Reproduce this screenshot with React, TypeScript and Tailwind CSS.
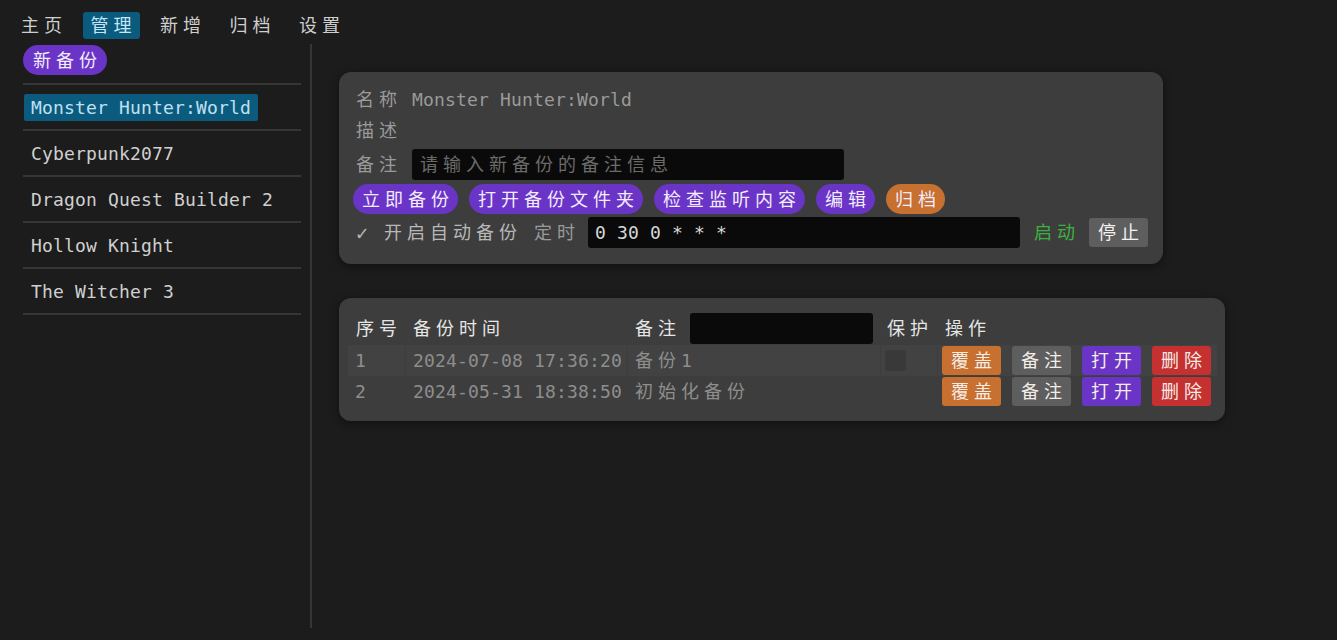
import React from "react";

const CJK = /[\u2e80-\u9fff\uff00-\uffef]/;

function T({ s }: { s: string }) {
  const runs: { cjk: boolean; t: string }[] = [];
  for (const ch of s) {
    const c = CJK.test(ch);
    const last = runs[runs.length - 1];
    if (last && last.cjk === c) last.t += ch;
    else runs.push({ cjk: c, t: ch });
  }
  return (
    <>
      {runs.map((r, i) =>
        r.cjk ? (
          <span
            key={i}
            className={i === runs.length - 1 ? "tracking-[5px] -mr-[5px]" : "tracking-[5px]"}
          >
            {r.t}
          </span>
        ) : (
          <span key={i}>{r.t}</span>
        )
      )}
    </>
  );
}

const navItems = ["主页", "管理", "新增", "归档", "设置"];
const games = ["Monster Hunter:World", "Cyberpunk2077", "Dragon Quest Builder 2", "Hollow Knight", "The Witcher 3"];

function Pill({ s, orange }: { s: string; orange?: boolean }) {
  return (
    <div
      className={
        "h-[30px] px-[9px] rounded-full flex items-center shrink-0 text-[#f3ecff] " +
        (orange ? "bg-[#c8702f]" : "bg-[#6a34c6]")
      }
    >
      <T s={s} />
    </div>
  );
}

function Btn({ s, color }: { s: string; color: string }) {
  return (
    <div className={"h-[29px] w-[59px] shrink-0 rounded-[3px] flex items-center justify-center text-[#f4ece6] " + color}>
      <T s={s} />
    </div>
  );
}

function ActionBtns() {
  return (
    <div className="flex items-center gap-[11px] pl-[4px]">
      <Btn s="覆盖" color="bg-[#c8702f]" />
      <Btn s="备注" color="bg-[#5e5e5e]" />
      <Btn s="打开" color="bg-[#6a34c6]" />
      <Btn s="删除" color="bg-[#c53030]" />
    </div>
  );
}

const cols = "grid grid-cols-[57px_221px_252px_56px_279px] gap-x-px";

export default function App() {
  return (
    <div
      className="bg-[#1c1c1c] h-[640px] w-full overflow-hidden whitespace-nowrap text-[18px] tracking-[0.16px] text-[#cfcfcf]"
      style={{ fontFamily: '"DejaVu Sans Mono", "Noto Sans CJK SC", monospace' }}
    >
      {/* nav */}
      <div className="flex pl-[13px] pt-[12px] gap-[12.5px]">
        {navItems.map((n, i) => (
          <div
            key={n}
            className={
              "h-[27px] px-2 flex items-center rounded-[3px] " +
              (i === 1 ? "bg-[#0b5b7e] text-[#c6e6f6]" : "text-[#cfcfcf]")
            }
          >
            <T s={n} />
          </div>
        ))}
      </div>

      <div className="flex mt-[5px] h-[584px]">
        {/* sidebar */}
        <div className="ml-[23px] w-[278px] mr-[9px] pt-[1px] shrink-0">
          <div className="flex">
            <div className="h-[30px] px-[10px] rounded-full bg-[#6a34c6] text-[#f3ecff] flex items-center">
              <T s="新备份" />
            </div>
          </div>
          <div className="mt-[8px] border-t-2 border-[#363636]">
            {games.map((g, i) => (
              <div key={g} className="h-[46px] border-b-2 border-[#363636] flex items-center pl-px">
                <span
                  className={
                    "h-[27px] px-[7px] flex items-center rounded-[2px] " +
                    (i === 0 ? "bg-[#0b5b7e] text-[#c0e0f2]" : "text-[#d0d0d0]")
                  }
                >
                  {g}
                </span>
              </div>
            ))}
          </div>
        </div>
        <div className="w-[2px] bg-[#363636] shrink-0" />

        {/* main */}
        <div className="pl-[27px] pt-[28px]">
          {/* card 1 */}
          <div className="w-[824px] bg-[#3d3d3d] rounded-[12px] shadow-[0_2px_10px_rgba(0,0,0,0.45)] px-[14px] pt-[12px] pb-[16px]">
            <div className="h-[31px] flex items-center pl-[3px] text-[#9a9a9a]">
              <div className="w-[56px] shrink-0">
                <T s="名称" />
              </div>
              <span>Monster Hunter:World</span>
            </div>
            <div className="h-[31px] flex items-center pl-[3px] text-[#9a9a9a]">
              <T s="描述" />
            </div>
            <div className="mt-[3px] h-[31px] flex items-center pl-[3px] text-[#9a9a9a]">
              <div className="w-[56px] shrink-0">
                <T s="备注" />
              </div>
              <div className="h-[31px] w-[432px] shrink-0 bg-[#0a0a0a] rounded-[3px] flex items-center pl-[8px] text-[#6b6b6b]">
                <T s="请输入新备份的备注信息" />
              </div>
            </div>
            <div className="mt-[4px] flex items-center gap-[11px]">
              <Pill s="立即备份" />
              <Pill s="打开备份文件夹" />
              <Pill s="检查监听内容" />
              <Pill s="编辑" />
              <Pill s="归档" orange />
            </div>
            <div className="mt-[3px] h-[31px] flex items-center pl-[3px]">
              <span className="text-[#b8b8b8] shrink-0 flex items-center">
                <span className="inline-block w-[17px] text-[20px] leading-none">✓</span>
                <span className="ml-[11px]">
                  <T s="开启自动备份" />
                </span>
              </span>
              <span className="ml-[17px] text-[#9a9a9a] shrink-0">
                <T s="定时" />
              </span>
              <div className="ml-[13px] h-[31px] w-[432px] shrink-0 bg-[#0a0a0a] rounded-[3px] flex items-center pl-[7px] text-[#d8d8d8]">
                0 30 0 * * *
              </div>
              <span className="ml-[14px] text-[#3cb13f] shrink-0">
                <T s="启动" />
              </span>
              <div className="ml-[14px] h-[29px] w-[59px] shrink-0 rounded-[3px] bg-[#5e5e5e] flex items-center justify-center text-[#f2f2f2]">
                <T s="停止" />
              </div>
            </div>
          </div>

          {/* card 2 */}
          <div className="mt-[34px] w-[886px] bg-[#3d3d3d] rounded-[12px] shadow-[0_2px_10px_rgba(0,0,0,0.45)] pl-[9px] pr-[10px] pt-[15px] pb-[14px]">
            <div className={cols + " text-[#e6e6e6]"}>
              <div className="h-[31px] flex items-center pl-[8px]">
                <T s="序号" />
              </div>
              <div className="h-[31px] flex items-center pl-[7px]">
                <T s="备份时间" />
              </div>
              <div className="h-[31px] flex items-center pl-[7px]">
                <T s="备注" />
                <div className="ml-[14px] h-[31px] w-[183px] shrink-0 bg-[#0a0a0a] rounded-[3px]" />
              </div>
              <div className="h-[31px] flex items-center pl-[6px]">
                <T s="保护" />
              </div>
              <div className="h-[31px] flex items-center pl-[7px]">
                <T s="操作" />
              </div>
            </div>
            <div className={cols + " mt-[1px] text-[#8e8e8e]"}>
              <div className="h-[31px] bg-[#424242] flex items-center pl-[7px]">1</div>
              <div className="h-[31px] bg-[#424242] flex items-center pl-[7px]">2024-07-08 17:36:20</div>
              <div className="h-[31px] bg-[#424242] flex items-center pl-[7px]">
                <T s="备份1" />
              </div>
              <div className="h-[31px] bg-[#424242] flex items-center pl-[4px]">
                <div className="w-[21px] h-[21px] rounded-[3px] bg-[#393939]" />
              </div>
              <div className="h-[31px] bg-[#424242] flex items-center">
                <ActionBtns />
              </div>
            </div>
            <div className={cols + " text-[#8e8e8e]"}>
              <div className="h-[31px] flex items-center pl-[7px]">2</div>
              <div className="h-[31px] flex items-center pl-[7px]">2024-05-31 18:38:50</div>
              <div className="h-[31px] flex items-center pl-[7px]">
                <T s="初始化备份" />
              </div>
              <div className="h-[31px]" />
              <div className="h-[31px] flex items-center">
                <ActionBtns />
              </div>
            </div>
          </div>
        </div>
      </div>
    </div>
  );
}
